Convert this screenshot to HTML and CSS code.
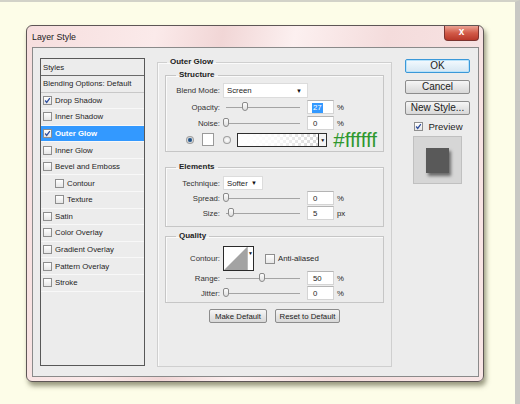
FILE: index.html
```html
<!DOCTYPE html>
<html lang="en">
<head>
<meta charset="UTF-8">
<title>Layer Style</title>
<link rel="stylesheet" href="styles.css">
</head>
<body>
<div class="desk">
  <div class="window">
    <div class="titlebar">
      <span class="title">Layer Style</span>
      <span class="close">x</span>
    </div>
    <div class="content">

      <ul class="styles">
        <li class="head">Styles</li>
        <li class="blend">Blending Options: Default</li>
        <li><span class="cb on"><svg viewBox="0 0 9 9"><polyline points="1.5,4.5 3.5,7 7.5,1.5"/></svg></span>Drop Shadow</li>
        <li><span class="cb"></span>Inner Shadow</li>
        <li class="active"><span class="cb on"><svg viewBox="0 0 9 9"><polyline points="1.5,4.5 3.5,7 7.5,1.5"/></svg></span>Outer Glow</li>
        <li><span class="cb"></span>Inner Glow</li>
        <li><span class="cb"></span>Bevel and Emboss</li>
        <li class="sub"><span class="cb"></span>Contour</li>
        <li class="sub"><span class="cb"></span>Texture</li>
        <li><span class="cb"></span>Satin</li>
        <li><span class="cb"></span>Color Overlay</li>
        <li><span class="cb"></span>Gradient Overlay</li>
        <li><span class="cb"></span>Pattern Overlay</li>
        <li><span class="cb"></span>Stroke</li>
      </ul>

      <fieldset class="main">
        <legend>Outer Glow</legend>

        <fieldset class="group structure">
          <legend>Structure</legend>
          <div class="row">
            <label>Blend Mode:</label>
            <div class="select blend-mode"><span>Screen</span><i>&#9660;</i></div>
          </div>
          <div class="row">
            <label>Opacity:</label>
            <div class="slider"><span class="thumb" style="left: 19px"></span></div>
            <div class="num"><span class="sel">27</span></div>
            <span class="unit">%</span>
          </div>
          <div class="row">
            <label>Noise:</label>
            <div class="slider"><span class="thumb" style="left: 0px"></span></div>
            <div class="num">0</div>
            <span class="unit">%</span>
          </div>
          <div class="row color-row">
            <span class="radio on"></span>
            <span class="swatch"></span>
            <span class="radio"></span>
            <div class="gradient"><span class="fade"></span><i>&#9660;</i></div>
            <span class="hex">#ffffff</span>
          </div>
        </fieldset>

        <fieldset class="group elements">
          <legend>Elements</legend>
          <div class="row">
            <label>Technique:</label>
            <div class="select technique"><span>Softer</span><i>&#9660;</i></div>
          </div>
          <div class="row">
            <label>Spread:</label>
            <div class="slider"><span class="thumb" style="left: 0px"></span></div>
            <div class="num">0</div>
            <span class="unit">%</span>
          </div>
          <div class="row">
            <label>Size:</label>
            <div class="slider"><span class="thumb" style="left: 5px"></span></div>
            <div class="num">5</div>
            <span class="unit">px</span>
          </div>
        </fieldset>

        <fieldset class="group quality">
          <legend>Quality</legend>
          <div class="row contour-row">
            <label>Contour:</label>
            <div class="contour">
              <svg viewBox="0 0 24 23" preserveAspectRatio="none"><polygon points="0,23 24,0 24,23" fill="#a3a3a3"/></svg>
              <i>&#9660;</i>
            </div>
            <span class="cb aa"></span>
            <span class="aa-label">Anti-aliased</span>
          </div>
          <div class="row">
            <label>Range:</label>
            <div class="slider"><span class="thumb" style="left: 36px"></span></div>
            <div class="num">50</div>
            <span class="unit">%</span>
          </div>
          <div class="row">
            <label>Jitter:</label>
            <div class="slider"><span class="thumb" style="left: 0px"></span></div>
            <div class="num">0</div>
            <span class="unit">%</span>
          </div>
        </fieldset>

        <div class="actions">
          <button class="small make">Make Default</button>
          <button class="small reset">Reset to Default</button>
        </div>
      </fieldset>

      <div class="side">
        <button class="big ok">OK</button>
        <button class="big">Cancel</button>
        <button class="big">New Style...</button>
        <div class="preview-check">
          <span class="cb on"><svg viewBox="0 0 9 9"><polyline points="1.5,4.5 3.5,7 7.5,1.5"/></svg></span>
          <span>Preview</span>
        </div>
        <div class="preview"><span class="square"></span></div>
      </div>

    </div>
  </div>
</div>
</body>
</html>
```

FILE: styles.css
```css
body {
  margin: 0;
  font-family: "Liberation Sans", Arial, sans-serif;
  font-size: 7.8px;
  color: #1e1e1e;
}
.desk {
  box-sizing: border-box;
  height: 404px;
  padding: 23px 0 0 26px;
  background-color: #fdfde8;
  border-top: 2px solid #d2d2c8;
  border-right: 5px solid #c8c8c4;
}

/* window frame */
.window {
  box-sizing: border-box;
  width: 458px;
  height: 357px;
  padding: 0 4px 4px 5px;
  border: 1px solid #5e5656;
  border-radius: 6px;
  background: linear-gradient(100deg, #f6dede 0%, #fbeaea 25%, #f1d6d6 38%, #fcf0f0 52%, #f4dcdc 70%, #f9e6e6 100%);
  box-shadow: 2px 4px 5px rgba(70, 70, 40, 0.55);
}
.titlebar {
  display: flex;
  justify-content: space-between;
  align-items: flex-start;
  height: 21px;
}
.title {
  margin-top: 6px;
  font-size: 8.8px;
  color: #1a1a1a;
}
.close {
  box-sizing: border-box;
  width: 35px;
  height: 15px;
  border: 1px solid #7c3430;
  border-top: none;
  border-radius: 0 0 4px 4px;
  background: linear-gradient(#eba293, #d25a48 50%, #b8382a);
  color: #fff;
  font-weight: bold;
  font-size: 10px;
  line-height: 12px;
  text-align: center;
}

.content {
  box-sizing: border-box;
  display: flex;
  align-items: flex-start;
  width: 447px;
  height: 330px;
  padding: 10px 0 0 7px;
  border: 1px solid #8a8a8a;
  background-color: #ececec;
}

/* styles list */
.styles {
  box-sizing: border-box;
  width: 105px;
  height: 308px;
  margin: 0;
  padding: 0;
  list-style: none;
  border: 1px solid #585858;
}
.styles li {
  box-sizing: border-box;
  display: flex;
  align-items: center;
  height: 16.58px;
  padding-left: 2px;
  border-bottom: 1px solid #f8f8f8;
}
.styles li.head {
  height: 17px;
  border-bottom: 1px solid #6a6a6a;
}
.styles li.blend {
  border-bottom: 1px solid #c8c8c8;
}
.styles li.sub {
  padding-left: 14px;
}
.styles li.active {
  background-color: #3399ff;
  color: #fff;
  font-weight: bold;
}
.styles .cb {
  margin-right: 3px;
}

.cb {
  box-sizing: border-box;
  display: inline-block;
  flex: none;
  width: 9px;
  height: 9px;
  border: 1px solid #8e8e8e;
  background: linear-gradient(#ffffff, #e6e6e6);
}
.cb svg {
  display: block;
  width: 7px;
  height: 7px;
  fill: none;
  stroke: #2c4c9c;
  stroke-width: 1.6;
}

/* middle panel */
fieldset {
  margin: 0;
  min-width: 0;
  box-sizing: border-box;
}
legend {
  padding: 0 3px;
  margin-left: 2px;
  font-weight: bold;
  font-size: 8px;
  line-height: 10px;
  color: #222;
}
.main {
  width: 235px;
  height: 310px;
  margin: -1px 0 0 12px;
  padding: 3px 7px 0 7px;
  border: 1px solid #cfcfcf;
  box-shadow: inset 1px 1px 0 #fafafa;
}
.group {
  width: 219px;
  padding: 3px 6px 4px 8px;
  border: 1px solid #c6c6c6;
  box-shadow: inset 1px 1px 0 #fafafa;
}
.elements {
  margin-top: 10px;
  padding-top: 4px;
  padding-bottom: 6px;
}
.quality {
  margin-top: 4px;
  padding-top: 5px;
  padding-bottom: 2px;
}

.row {
  display: flex;
  align-items: center;
  height: 14px;
  margin-bottom: 1px;
}
.row label {
  width: 46px;
  margin-right: 3px;
  text-align: right;
  color: #333;
}
.structure .row {
  margin-bottom: 2px;
}
.structure .row:first-of-type,
.structure .color-row {
  height: 15px;
}
.row:last-child {
  margin-bottom: 0;
}
.quality .contour-row {
  margin-bottom: 0;
}

.select {
  box-sizing: border-box;
  display: flex;
  justify-content: space-between;
  align-items: center;
  height: 15px;
  padding: 0 5px 0 3px;
  background-color: #fff;
  border: 1px solid #dcdcdc;
}
.select i {
  font-style: normal;
  font-size: 6px;
  color: #111;
}
.blend-mode {
  width: 85px;
}
.technique {
  width: 40px;
  height: 14px;
}

.slider {
  position: relative;
  width: 77px;
  height: 14px;
  margin-right: 7px;
}
.slider::before {
  content: "";
  position: absolute;
  left: 3px;
  right: 0;
  top: 7px;
  border-top: 1px solid #a4a4a4;
}
.thumb {
  position: absolute;
  top: 2px;
  box-sizing: border-box;
  width: 6px;
  height: 9px;
  border: 1px solid #8a8a8a;
  border-radius: 2px 2px 3px 3px;
  background: linear-gradient(#fdfdfd, #e0e0e0);
}

.num {
  box-sizing: border-box;
  width: 27px;
  height: 14px;
  padding-left: 5px;
  line-height: 13px;
  background-color: #fff;
  border: 1px solid #d4d4d4;
  border-top-color: #b4b4b4;
}
.num .sel {
  display: inline-block;
  padding: 0 1px;
  margin-left: -1px;
  line-height: 10px;
  background-color: #3399ff;
  color: #fff;
}
.unit {
  margin-left: 3px;
}

.color-row {
  padding-left: 12px;
}
.radio {
  box-sizing: border-box;
  width: 8px;
  height: 8px;
  border: 1px solid #a0a0a0;
  border-radius: 50%;
  background: radial-gradient(#ffffff, #dcdcdc);
}
.radio.on {
  background: radial-gradient(#1c3c6a 0, #3c6c9c 40%, #d8d8d8 60%);
}
.swatch {
  box-sizing: border-box;
  width: 12px;
  height: 13px;
  margin: 0 9px 0 8px;
  background-color: #fff;
  border: 1px solid #9a9a9a;
}
.gradient {
  box-sizing: border-box;
  display: flex;
  width: 91px;
  height: 14px;
  margin-left: 6px;
  border: 1px solid #2e2e2e;
  background-color: #fff;
  background-image:
    linear-gradient(45deg, #d8d8d8 25%, transparent 25%, transparent 75%, #d8d8d8 75%),
    linear-gradient(45deg, #d8d8d8 25%, transparent 25%, transparent 75%, #d8d8d8 75%);
  background-size: 6px 6px;
  background-position: 0 0, 3px 3px;
}
.gradient .fade {
  flex: 1;
  background: linear-gradient(90deg, #fff 0%, rgba(255, 255, 255, 0.85) 45%, rgba(255, 255, 255, 0) 100%);
}
.gradient i {
  width: 7px;
  border-left: 1px solid #2e2e2e;
  background-color: #f4f4f4;
  font-style: normal;
  font-size: 5px;
  line-height: 12px;
  text-align: center;
  color: #111;
}
.hex {
  margin-left: 6px;
  font-size: 20.5px;
  line-height: 15px;
  color: #2f982f;
}

.contour-row {
  height: 25px;
}
.contour {
  box-sizing: border-box;
  display: flex;
  width: 31px;
  height: 25px;
  border: 1px solid #2a2a2a;
  background-color: #fff;
}
.contour svg {
  width: 24px;
  height: 23px;
}
.contour i {
  flex: 1;
  border-left: 1px solid #bbb;
  font-style: normal;
  font-size: 5px;
  line-height: 12px;
  text-align: center;
  color: #111;
}
.cb.aa {
  width: 10px;
  height: 10px;
  margin-left: 11px;
}
.aa-label {
  margin-left: 3px;
}

.actions {
  display: flex;
  justify-content: center;
  gap: 8px;
  margin-top: 6px;
}
button {
  font-family: "Liberation Sans", Arial, sans-serif;
  color: #222;
  box-sizing: border-box;
  padding: 0;
  border: 1px solid #8c8c8c;
  border-radius: 2px;
  background: linear-gradient(#f6f6f6, #e6e6e6 50%, #d8d8d8);
}
.small {
  height: 14px;
  font-size: 7.8px;
}
.make {
  width: 58px;
}
.reset {
  width: 65px;
}

/* right column */
.side {
  display: flex;
  flex-direction: column;
  align-items: center;
  width: 65px;
  margin: 1px 0 0 13px;
}
.big {
  width: 65px;
  height: 14px;
  margin-bottom: 7px;
  font-size: 10px;
  line-height: 12px;
}
.ok {
  border-color: #3a98d8;
  background: linear-gradient(#f4fafe, #e4f0f8 50%, #d6e6f2);
  box-shadow: inset 0 0 0 1px #b8e2fa;
}
.preview-check {
  display: flex;
  align-items: center;
  gap: 5px;
  height: 10px;
  margin: -1px 0 5px 2px;
  font-size: 9.6px;
}
.preview {
  box-sizing: border-box;
  display: flex;
  justify-content: center;
  align-items: center;
  width: 49px;
  height: 48px;
  border: 1px solid #c0c0c0;
  background-color: #d6d6d6;
}
.square {
  width: 23px;
  height: 25px;
  background-color: #595959;
  box-shadow: 2px 3px 3px rgba(0, 0, 0, 0.5);
}
```
